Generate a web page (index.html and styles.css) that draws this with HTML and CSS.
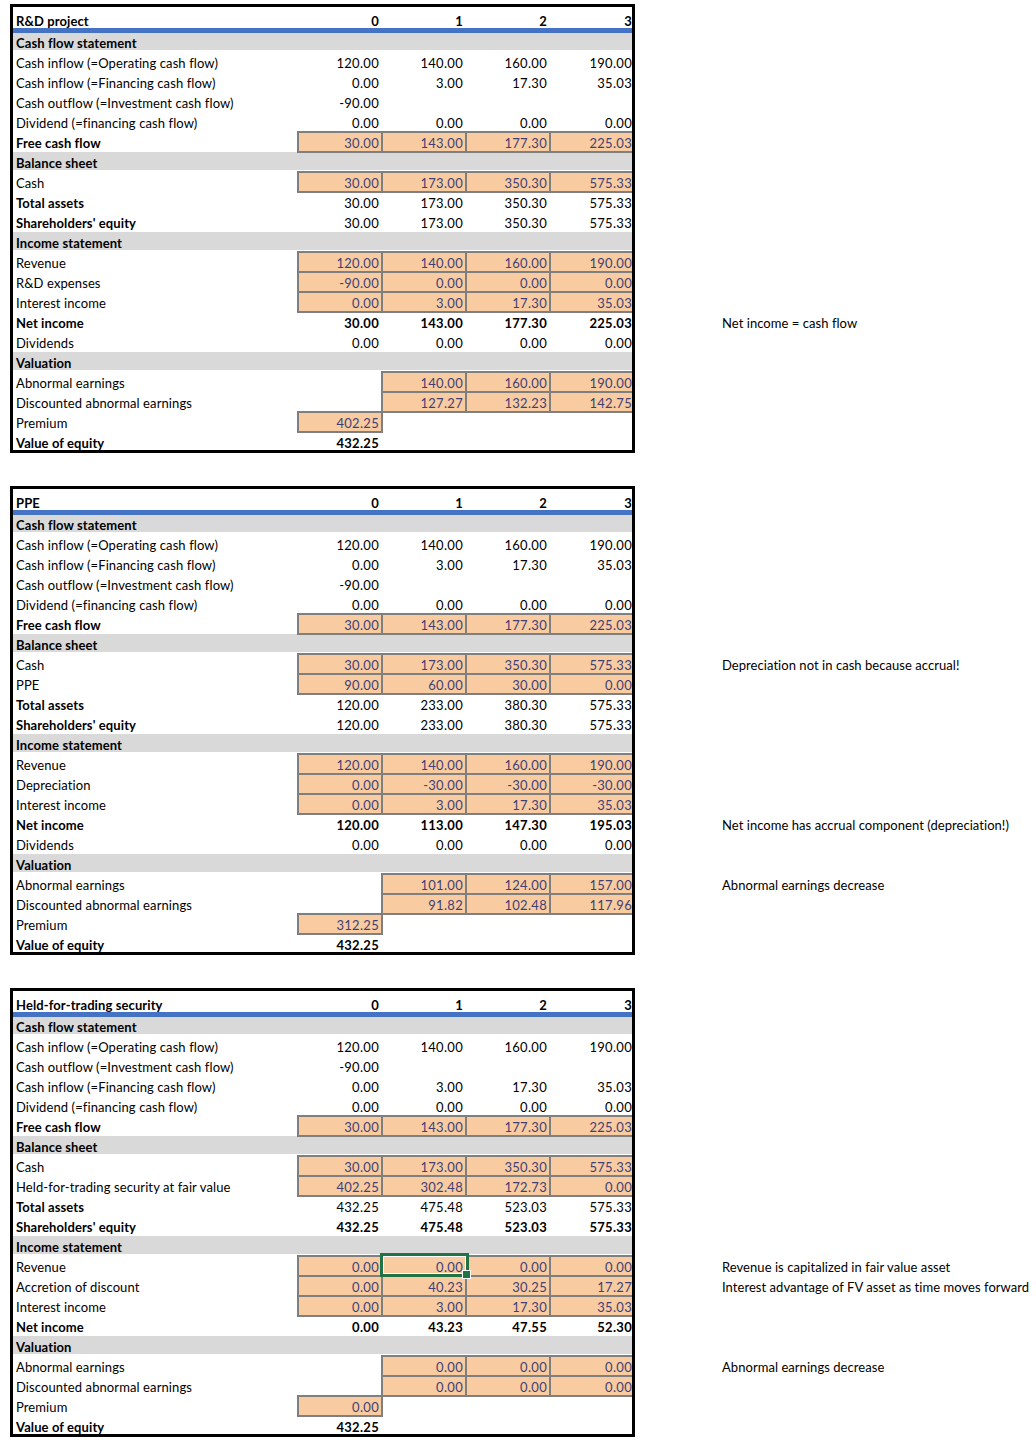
FILE: index.html
```html
<!DOCTYPE html>
<html>
<head>
<meta charset="utf-8">
<link rel="stylesheet" href="styles.css">
</head>
<body>
<div class="page">

<section class="block">
  <div class="sheet">
    <div class="row title"><span>R&amp;D project</span><span class="num">0</span><span class="num">1</span><span class="num">2</span><span class="num">3</span></div>
    <div class="row sec first"><span>Cash flow statement</span></div>
    <div class="row"><span>Cash inflow (=Operating cash flow)</span><span class="num">120.00</span><span class="num">140.00</span><span class="num">160.00</span><span class="num">190.00</span></div>
    <div class="row"><span>Cash inflow (=Financing cash flow)</span><span class="num">0.00</span><span class="num">3.00</span><span class="num">17.30</span><span class="num">35.03</span></div>
    <div class="row"><span>Cash outflow (=Investment cash flow)</span><span class="num">-90.00</span><span></span><span></span><span></span></div>
    <div class="row"><span>Dividend (=financing cash flow)</span><span class="num">0.00</span><span class="num">0.00</span><span class="num">0.00</span><span class="num">0.00</span></div>
    <div class="row"><span class="b">Free cash flow</span><span class="num in">30.00</span><span class="num in">143.00</span><span class="num in">177.30</span><span class="num in">225.03</span></div>
    <div class="row sec"><span>Balance sheet</span></div>
    <div class="row"><span>Cash</span><span class="num in">30.00</span><span class="num in">173.00</span><span class="num in">350.30</span><span class="num in">575.33</span></div>
    <div class="row"><span class="b">Total assets</span><span class="num">30.00</span><span class="num">173.00</span><span class="num">350.30</span><span class="num">575.33</span></div>
    <div class="row"><span class="b">Shareholders' equity</span><span class="num">30.00</span><span class="num">173.00</span><span class="num">350.30</span><span class="num">575.33</span></div>
    <div class="row sec"><span>Income statement</span></div>
    <div class="row"><span>Revenue</span><span class="num in">120.00</span><span class="num in">140.00</span><span class="num in">160.00</span><span class="num in">190.00</span></div>
    <div class="row"><span>R&amp;D expenses</span><span class="num in">-90.00</span><span class="num in">0.00</span><span class="num in">0.00</span><span class="num in">0.00</span></div>
    <div class="row"><span>Interest income</span><span class="num in">0.00</span><span class="num in">3.00</span><span class="num in">17.30</span><span class="num in">35.03</span></div>
    <div class="row bold"><span>Net income</span><span class="num">30.00</span><span class="num">143.00</span><span class="num">177.30</span><span class="num">225.03</span></div>
    <div class="row"><span>Dividends</span><span class="num">0.00</span><span class="num">0.00</span><span class="num">0.00</span><span class="num">0.00</span></div>
    <div class="row sec"><span>Valuation</span></div>
    <div class="row"><span>Abnormal earnings</span><span></span><span class="num in">140.00</span><span class="num in">160.00</span><span class="num in">190.00</span></div>
    <div class="row"><span>Discounted abnormal earnings</span><span></span><span class="num in">127.27</span><span class="num in">132.23</span><span class="num in">142.75</span></div>
    <div class="row"><span>Premium</span><span class="num in">402.25</span></div>
    <div class="row bold last"><span>Value of equity</span><span class="num">432.25</span></div>
  </div>
  <div class="notes">
    <div class="note"></div><div class="note"></div><div class="note"></div><div class="note"></div><div class="note"></div>
    <div class="note"></div><div class="note"></div><div class="note"></div><div class="note"></div><div class="note"></div>
    <div class="note"></div><div class="note"></div><div class="note"></div>
    <div class="note">Net income = cash flow</div>
  </div>
</section>

<section class="block">
  <div class="sheet">
    <div class="row title"><span>PPE</span><span class="num">0</span><span class="num">1</span><span class="num">2</span><span class="num">3</span></div>
    <div class="row sec first"><span>Cash flow statement</span></div>
    <div class="row"><span>Cash inflow (=Operating cash flow)</span><span class="num">120.00</span><span class="num">140.00</span><span class="num">160.00</span><span class="num">190.00</span></div>
    <div class="row"><span>Cash inflow (=Financing cash flow)</span><span class="num">0.00</span><span class="num">3.00</span><span class="num">17.30</span><span class="num">35.03</span></div>
    <div class="row"><span>Cash outflow (=Investment cash flow)</span><span class="num">-90.00</span><span></span><span></span><span></span></div>
    <div class="row"><span>Dividend (=financing cash flow)</span><span class="num">0.00</span><span class="num">0.00</span><span class="num">0.00</span><span class="num">0.00</span></div>
    <div class="row"><span class="b">Free cash flow</span><span class="num in">30.00</span><span class="num in">143.00</span><span class="num in">177.30</span><span class="num in">225.03</span></div>
    <div class="row sec"><span>Balance sheet</span></div>
    <div class="row"><span>Cash</span><span class="num in">30.00</span><span class="num in">173.00</span><span class="num in">350.30</span><span class="num in">575.33</span></div>
    <div class="row"><span>PPE</span><span class="num in">90.00</span><span class="num in">60.00</span><span class="num in">30.00</span><span class="num in">0.00</span></div>
    <div class="row"><span class="b">Total assets</span><span class="num">120.00</span><span class="num">233.00</span><span class="num">380.30</span><span class="num">575.33</span></div>
    <div class="row"><span class="b">Shareholders' equity</span><span class="num">120.00</span><span class="num">233.00</span><span class="num">380.30</span><span class="num">575.33</span></div>
    <div class="row sec"><span>Income statement</span></div>
    <div class="row"><span>Revenue</span><span class="num in">120.00</span><span class="num in">140.00</span><span class="num in">160.00</span><span class="num in">190.00</span></div>
    <div class="row"><span>Depreciation</span><span class="num in">0.00</span><span class="num in">-30.00</span><span class="num in">-30.00</span><span class="num in">-30.00</span></div>
    <div class="row"><span>Interest income</span><span class="num in">0.00</span><span class="num in">3.00</span><span class="num in">17.30</span><span class="num in">35.03</span></div>
    <div class="row bold"><span>Net income</span><span class="num">120.00</span><span class="num">113.00</span><span class="num">147.30</span><span class="num">195.03</span></div>
    <div class="row"><span>Dividends</span><span class="num">0.00</span><span class="num">0.00</span><span class="num">0.00</span><span class="num">0.00</span></div>
    <div class="row sec"><span>Valuation</span></div>
    <div class="row"><span>Abnormal earnings</span><span></span><span class="num in">101.00</span><span class="num in">124.00</span><span class="num in">157.00</span></div>
    <div class="row"><span>Discounted abnormal earnings</span><span></span><span class="num in">91.82</span><span class="num in">102.48</span><span class="num in">117.96</span></div>
    <div class="row"><span>Premium</span><span class="num in">312.25</span></div>
    <div class="row bold last"><span>Value of equity</span><span class="num">432.25</span></div>
  </div>
  <div class="notes">
    <div class="note"></div><div class="note"></div><div class="note"></div><div class="note"></div><div class="note"></div>
    <div class="note"></div>
    <div class="note">Depreciation not in cash because accrual!</div>
    <div class="note"></div><div class="note"></div><div class="note"></div><div class="note"></div><div class="note"></div>
    <div class="note"></div><div class="note"></div>
    <div class="note">Net income has accrual component (depreciation!)</div>
    <div class="note"></div><div class="note"></div>
    <div class="note">Abnormal earnings decrease</div>
  </div>
</section>

<section class="block">
  <div class="sheet">
    <div class="row title"><span>Held-for-trading security</span><span class="num">0</span><span class="num">1</span><span class="num">2</span><span class="num">3</span></div>
    <div class="row sec first"><span>Cash flow statement</span></div>
    <div class="row"><span>Cash inflow (=Operating cash flow)</span><span class="num">120.00</span><span class="num">140.00</span><span class="num">160.00</span><span class="num">190.00</span></div>
    <div class="row"><span>Cash outflow (=Investment cash flow)</span><span class="num">-90.00</span><span></span><span></span><span></span></div>
    <div class="row"><span>Cash inflow (=Financing cash flow)</span><span class="num">0.00</span><span class="num">3.00</span><span class="num">17.30</span><span class="num">35.03</span></div>
    <div class="row"><span>Dividend (=financing cash flow)</span><span class="num">0.00</span><span class="num">0.00</span><span class="num">0.00</span><span class="num">0.00</span></div>
    <div class="row"><span class="b">Free cash flow</span><span class="num in">30.00</span><span class="num in">143.00</span><span class="num in">177.30</span><span class="num in">225.03</span></div>
    <div class="row sec"><span>Balance sheet</span></div>
    <div class="row"><span>Cash</span><span class="num in">30.00</span><span class="num in">173.00</span><span class="num in">350.30</span><span class="num in">575.33</span></div>
    <div class="row"><span>Held-for-trading security at fair value</span><span class="num in">402.25</span><span class="num in">302.48</span><span class="num in">172.73</span><span class="num in">0.00</span></div>
    <div class="row"><span class="b">Total assets</span><span class="num">432.25</span><span class="num">475.48</span><span class="num">523.03</span><span class="num">575.33</span></div>
    <div class="row bold"><span>Shareholders' equity</span><span class="num">432.25</span><span class="num">475.48</span><span class="num">523.03</span><span class="num">575.33</span></div>
    <div class="row sec"><span>Income statement</span></div>
    <div class="row"><span>Revenue</span><span class="num in">0.00</span><span class="num in sel">0.00<i class="handle"></i></span><span class="num in">0.00</span><span class="num in">0.00</span></div>
    <div class="row"><span>Accretion of discount</span><span class="num in">0.00</span><span class="num in">40.23</span><span class="num in">30.25</span><span class="num in">17.27</span></div>
    <div class="row"><span>Interest income</span><span class="num in">0.00</span><span class="num in">3.00</span><span class="num in">17.30</span><span class="num in">35.03</span></div>
    <div class="row bold"><span>Net income</span><span class="num">0.00</span><span class="num">43.23</span><span class="num">47.55</span><span class="num">52.30</span></div>
    <div class="row sec"><span>Valuation</span></div>
    <div class="row"><span>Abnormal earnings</span><span></span><span class="num in">0.00</span><span class="num in">0.00</span><span class="num in">0.00</span></div>
    <div class="row"><span>Discounted abnormal earnings</span><span></span><span class="num in">0.00</span><span class="num in">0.00</span><span class="num in">0.00</span></div>
    <div class="row"><span>Premium</span><span class="num in">0.00</span></div>
    <div class="row bold last"><span>Value of equity</span><span class="num">432.25</span></div>
  </div>
  <div class="notes">
    <div class="note"></div><div class="note"></div><div class="note"></div><div class="note"></div><div class="note"></div>
    <div class="note"></div><div class="note"></div><div class="note"></div><div class="note"></div><div class="note"></div>
    <div class="note"></div>
    <div class="note">Revenue is capitalized in fair value asset</div>
    <div class="note">Interest advantage of FV asset as time moves forward</div>
    <div class="note"></div><div class="note"></div><div class="note"></div>
    <div class="note">Abnormal earnings decrease</div>
  </div>
</section>

</div>
</body>
</html>
```

FILE: styles.css
```css
html, body {
  margin: 0;
  padding: 0;
  background: #ffffff;
}

body {
  font-family: "Lato", "Open Sans", sans-serif;
  font-size: 13px;
  color: #000000;
}

.page {
  display: flex;
  flex-direction: column;
  gap: 33px;
  padding: 4px 0 0 10px;
}

.block {
  display: flex;
  align-items: flex-start;
  gap: 87px;
}

.sheet {
  flex: 0 0 auto;
  width: 619px;
  border: 3px solid #000000;
  overflow: hidden;
}

.row {
  display: grid;
  grid-template-columns: 285px 84px 84px 84px 85px;
  width: 622px;
  height: 20px;
  box-sizing: border-box;
}

.row > span {
  display: block;
  padding: 0 3px;
  line-height: 22px;
  height: 20px;
  box-sizing: border-box;
  white-space: nowrap;
  letter-spacing: 0.1px;
}

.num {
  text-align: right;
  letter-spacing: 0.3px !important;
}

.b,
.bold > span {
  font-weight: 700;
}

.title {
  height: 26px;
  border-bottom: 5px solid #4472C4;
}

.title > span {
  font-weight: 700;
  line-height: 28px;
  height: 21px;
}

.sec {
  background: linear-gradient(#d9d9d9, #d9d9d9) top left / 100% 18px no-repeat;
}

.sec > span {
  font-weight: 700;
  line-height: 22px;
}

.sec.first {
  height: 19px;
  background-size: 100% 17px;
}

.sec.first > span {
  line-height: 20px;
  height: 19px;
}

.last {
  height: 18px;
}

.last > span {
  height: 18px;
}

.in {
  background: #F8CBA0;
  color: #3F3F76;
  border: 1px solid #7f7f7f;
  outline: 1px solid #7f7f7f;
  line-height: 20px !important;
  padding-right: 2px !important;
}

.sel {
  position: relative;
}

.sel::before {
  content: "";
  position: absolute;
  left: -3px;
  top: -4px;
  right: -4px;
  bottom: -2px;
  border: 3px solid #217346;
  box-shadow: inset 0 0 0 1px #ffffff;
  pointer-events: none;
}

.handle {
  position: absolute;
  right: -6px;
  bottom: -4px;
  width: 7px;
  height: 7px;
  background: #217346;
  border: 1px solid #ffffff;
}

.notes {
  flex: 0 0 auto;
  display: flex;
  flex-direction: column;
  padding-top: 48px;
}

.note {
  height: 20px;
  line-height: 22px;
  white-space: nowrap;
  letter-spacing: 0.05px;
}
```
